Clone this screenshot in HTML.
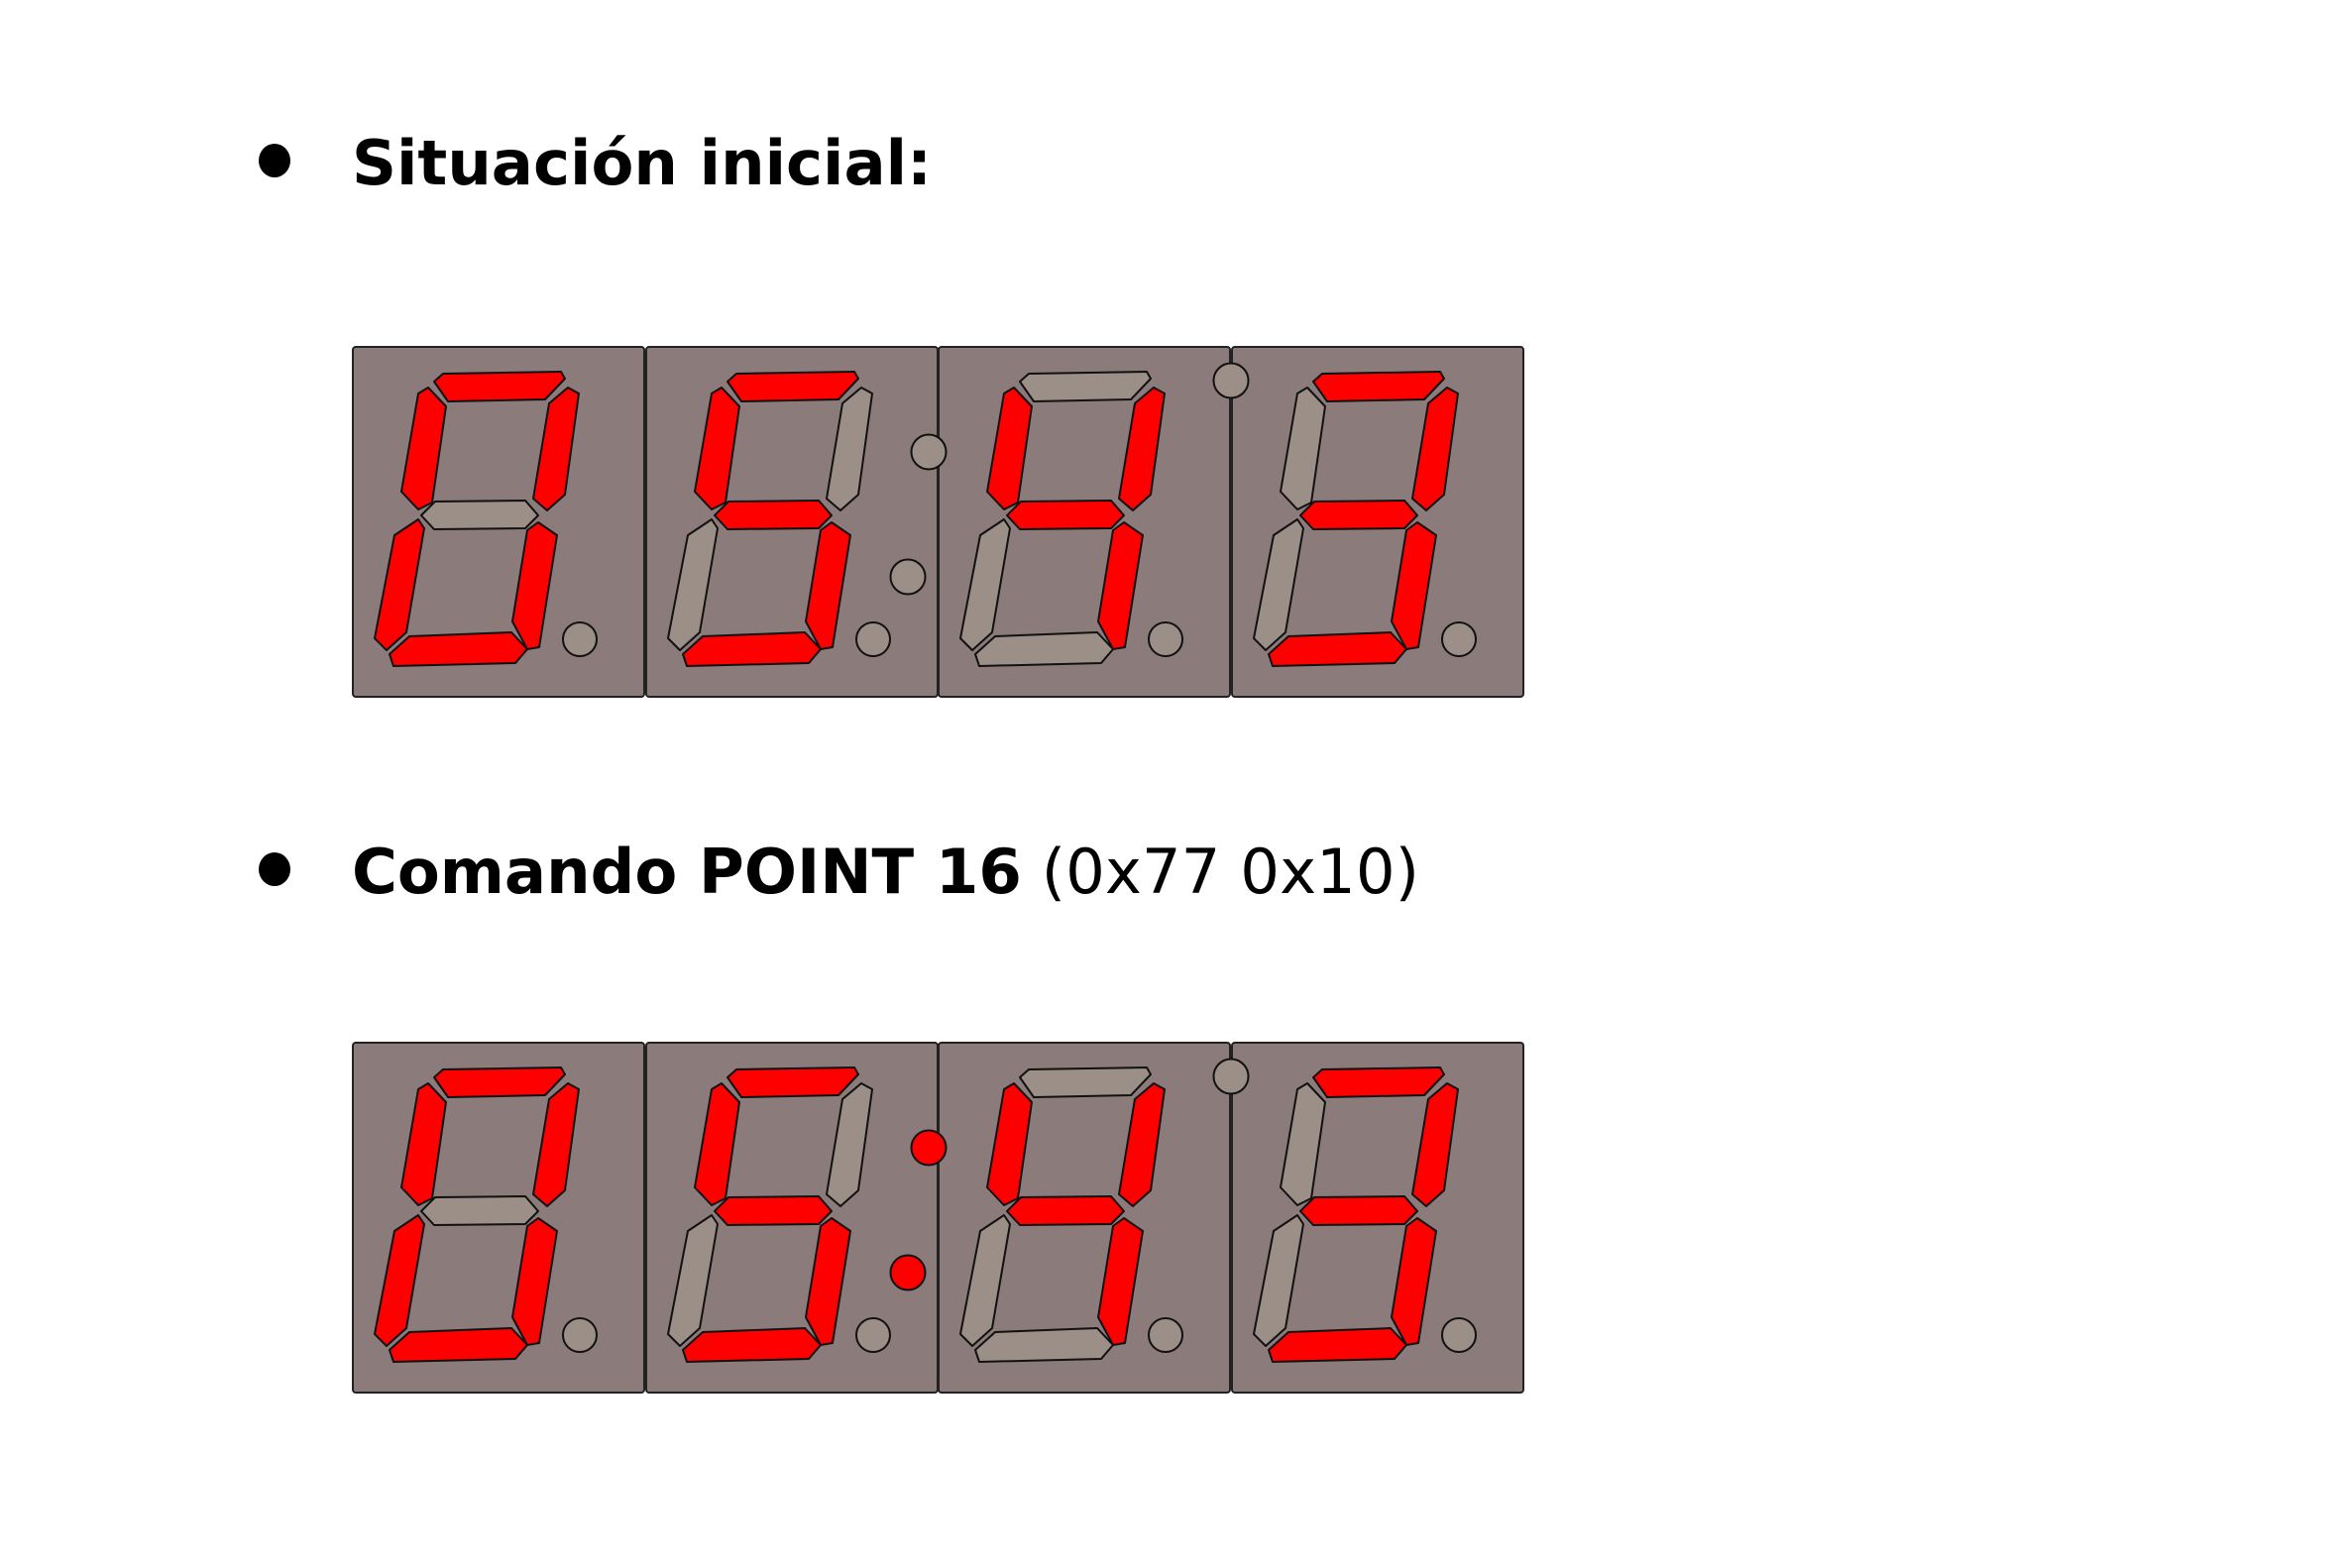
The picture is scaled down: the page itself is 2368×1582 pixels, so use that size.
<!DOCTYPE html>
<html><head><meta charset="utf-8"><style>
html,body{margin:0;padding:0;background:#fff;}
svg{display:block}
.p{fill:#8b7b7b;stroke:#222;stroke-width:2}
.on{fill:#ff0000;stroke:#111;stroke-width:2;stroke-linejoin:round}
.off{fill:#9c8f88;stroke:#111;stroke-width:2;stroke-linejoin:round}
text{font-family:"DejaVu Sans","Liberation Sans",sans-serif;font-size:62.5px;fill:#000}
</style></head><body>
<svg width="2368" height="1582" viewBox="0 0 2368 1582" xmlns="http://www.w3.org/2000/svg">
<defs>
<polygon id="a" points="82,35 91,27 210,25 214,32 194,53 96,55"/>
<polygon id="f" points="66,47 76,41 94,60 80,157 66,164 49,146"/>
<polygon id="b" points="198,57 217,41 228,47 214,149 196,165 182,153"/>
<polygon id="g" points="69,170 83,156 174,155 187,170 174,183 82,184"/>
<polygon id="e" points="42,190 66,174 72,183 54,288 34,306 22,294"/>
<polygon id="c" points="176,185 187,177 206,190 188,303 176,305 161,277"/>
<polygon id="d" points="37,310 57,292 160,288 176,305 164,319 41,322"/>
</defs>

<ellipse cx="277" cy="162" rx="16" ry="17" fill="#000"/>
<text x="355" y="186" font-weight="bold">Situación inicial:</text>
<ellipse cx="277" cy="877" rx="16" ry="17" fill="#000"/>
<text x="355" y="901"><tspan font-weight="bold">Comando POINT 16</tspan> (0x77 0x10)</text>

<!-- Row 1 -->
<g transform="translate(0,0)">
<rect class="p" x="356" y="350" width="294" height="353" rx="3"/>
<rect class="p" x="652" y="350" width="294" height="353" rx="3"/>
<rect class="p" x="947" y="350" width="294" height="353" rx="3"/>
<rect class="p" x="1243" y="350" width="294" height="353" rx="3"/>
<g transform="translate(356,350)">
<use href="#a" class="on"/><use href="#b" class="on"/><use href="#c" class="on"/><use href="#d" class="on"/><use href="#e" class="on"/><use href="#f" class="on"/><use href="#g" class="off"/>
<circle cx="229" cy="295" r="17" class="off"/></g>
<g transform="translate(652,350)">
<use href="#a" class="on"/><use href="#b" class="off"/><use href="#c" class="on"/><use href="#d" class="on"/><use href="#e" class="off"/><use href="#f" class="on"/><use href="#g" class="on"/>
<circle cx="229" cy="295" r="17" class="off"/></g>
<g transform="translate(947,350)">
<use href="#a" class="off"/><use href="#b" class="on"/><use href="#c" class="on"/><use href="#d" class="off"/><use href="#e" class="off"/><use href="#f" class="on"/><use href="#g" class="on"/>
<circle cx="229" cy="295" r="17" class="off"/></g>
<g transform="translate(1243,350)">
<use href="#a" class="on"/><use href="#b" class="on"/><use href="#c" class="on"/><use href="#d" class="on"/><use href="#e" class="off"/><use href="#f" class="off"/><use href="#g" class="on"/>
<circle cx="229" cy="295" r="17" class="off"/></g>
<circle cx="937" cy="456" r="17.5" class="off"/>
<circle cx="916" cy="582" r="17.5" class="off"/>
<circle cx="1242" cy="384" r="17.5" class="off"/>
</g>

<!-- Row 2 -->
<g transform="translate(0,702)">
<rect class="p" x="356" y="350" width="294" height="353" rx="3"/>
<rect class="p" x="652" y="350" width="294" height="353" rx="3"/>
<rect class="p" x="947" y="350" width="294" height="353" rx="3"/>
<rect class="p" x="1243" y="350" width="294" height="353" rx="3"/>
<g transform="translate(356,350)">
<use href="#a" class="on"/><use href="#b" class="on"/><use href="#c" class="on"/><use href="#d" class="on"/><use href="#e" class="on"/><use href="#f" class="on"/><use href="#g" class="off"/>
<circle cx="229" cy="295" r="17" class="off"/></g>
<g transform="translate(652,350)">
<use href="#a" class="on"/><use href="#b" class="off"/><use href="#c" class="on"/><use href="#d" class="on"/><use href="#e" class="off"/><use href="#f" class="on"/><use href="#g" class="on"/>
<circle cx="229" cy="295" r="17" class="off"/></g>
<g transform="translate(947,350)">
<use href="#a" class="off"/><use href="#b" class="on"/><use href="#c" class="on"/><use href="#d" class="off"/><use href="#e" class="off"/><use href="#f" class="on"/><use href="#g" class="on"/>
<circle cx="229" cy="295" r="17" class="off"/></g>
<g transform="translate(1243,350)">
<use href="#a" class="on"/><use href="#b" class="on"/><use href="#c" class="on"/><use href="#d" class="on"/><use href="#e" class="off"/><use href="#f" class="off"/><use href="#g" class="on"/>
<circle cx="229" cy="295" r="17" class="off"/></g>
<circle cx="937" cy="456" r="17.5" class="on"/>
<circle cx="916" cy="582" r="17.5" class="on"/>
<circle cx="1242" cy="384" r="17.5" class="off"/>
</g>
</svg>
</body></html>
